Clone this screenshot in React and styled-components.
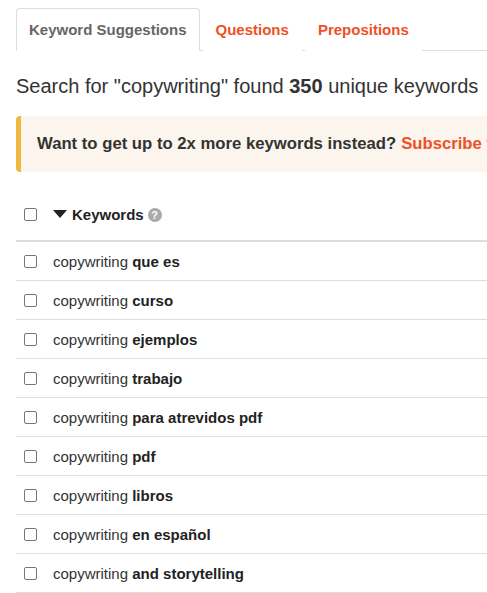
import React from "react";
import styled, { createGlobalStyle } from "styled-components";

const Global = createGlobalStyle`
  html, body { margin: 0; padding: 0; background: #fff; overflow: hidden; }
  body { font-family: "Liberation Sans", Arial, sans-serif; color: #333; }
`;

const Page = styled.div`
  padding: 8px 0 0 16px;
  width: 640px;
`;

const Tabs = styled.div`
  display: flex;
  border-bottom: 1px solid #ddd;
  height: 42px;
`;

const Tab = styled.div`
  display: flex;
  align-items: center;
  padding: 0 12px 0 12px;
  margin-right: 3px;
  font-size: 15px;
  font-weight: bold;
  color: ${(p) => (p.$active ? "#666" : "#ef5026")};
  border: 1px solid ${(p) => (p.$active ? "#ddd" : "transparent")};
  border-bottom-color: ${(p) => (p.$active ? "#fff" : "transparent")};
  border-radius: 4px 4px 0 0;
  background: #fff;
  margin-bottom: -1px;
`;

const Summary = styled.div`
  font-size: 20px;
  margin-top: 23px;
  line-height: 24px;
  white-space: nowrap;
  b { font-weight: bold; }
`;

const Alert = styled.div`
  margin-top: 18px;
  height: 56px;
  display: flex;
  align-items: center;
  background: #fbf5ed;
  border-left: 5px solid #f0b841;
  border-radius: 4px;
  padding-left: 16px;
  font-size: 16.7px;
  font-weight: bold;
  color: #333;
  white-space: nowrap;
`;

const Subscribe = styled.span`
  color: #ef5026;
  margin-left: 5px;
`;

const Table = styled.div`
  margin-top: 17px;
`;

const HeaderRow = styled.div`
  display: flex;
  align-items: center;
  height: 51px;
  border-bottom: 2px solid #ddd;
  padding-left: 8px;
  font-size: 15px;
  font-weight: bold;
  color: #222;
`;

const Row = styled.div`
  display: flex;
  align-items: center;
  height: 38px;
  border-bottom: 1px solid #ddd;
  padding-left: 8px;
  font-size: 15px;
  color: #333;
`;

const Check = styled.span`
  width: 11px;
  height: 11px;
  border: 1px solid #767676;
  border-radius: 2px;
  flex: none;
  margin-right: 16px;
  background: #fff;
`;

const Caret = styled.span`
  width: 0;
  height: 0;
  border-left: 7px solid transparent;
  border-right: 7px solid transparent;
  border-top: 8px solid #222;
  margin-right: 5px;
  margin-bottom: 1px;
`;

const Help = styled.span`
  display: inline-flex;
  align-items: center;
  justify-content: center;
  width: 14px;
  height: 14px;
  border-radius: 50%;
  background: #aaa;
  color: #fff;
  font-size: 11px;
  font-weight: bold;
  margin-left: 4px;
`;

const Kw = styled.span`
  white-space: nowrap;
  b { font-weight: bold; color: #222; }
`;

const rows = [
  "que es",
  "curso",
  "ejemplos",
  "trabajo",
  "para atrevidos pdf",
  "pdf",
  "libros",
  "en español",
  "and storytelling",
];

export default function App() {
  return (
    <Page>
      <Global />
      <Tabs>
        <Tab $active>Keyword Suggestions</Tab>
        <Tab>Questions</Tab>
        <Tab>Prepositions</Tab>
      </Tabs>
      <Summary>
        Search for "copywriting" found <b>350</b> unique keywords
      </Summary>
      <Alert>
        Want to get up to 2x more keywords instead?
        <Subscribe>Subscribe to get more</Subscribe>
      </Alert>
      <Table>
        <HeaderRow>
          <Check />
          <Caret />
          Keywords
          <Help>?</Help>
        </HeaderRow>
        {rows.map((r) => (
          <Row key={r}>
            <Check />
            <Kw>
              copywriting <b>{r}</b>
            </Kw>
          </Row>
        ))}
      </Table>
    </Page>
  );
}
